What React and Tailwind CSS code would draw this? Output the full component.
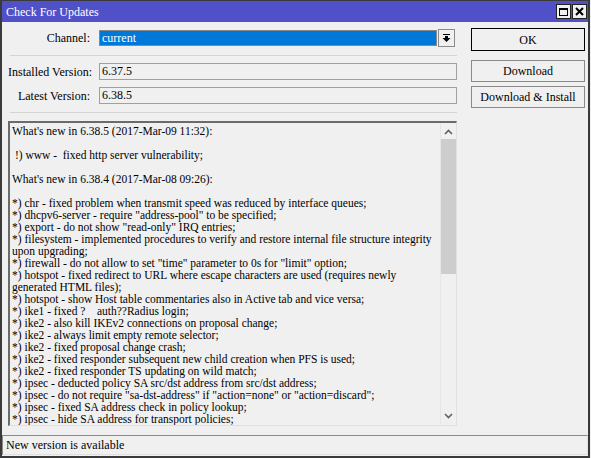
import React from "react";

const lines = [
  "What's new in 6.38.5 (2017-Mar-09 11:32):",
  "",
  " !) www -  fixed http server vulnerability;",
  "",
  "What's new in 6.38.4 (2017-Mar-08 09:26):",
  "",
  "*) chr - fixed problem when transmit speed was reduced by interface queues;",
  '*) dhcpv6-server - require "address-pool" to be specified;',
  '*) export - do not show "read-only" IRQ entries;',
  "*) filesystem - implemented procedures to verify and restore internal file structure integrity",
  "upon upgrading;",
  '*) firewall - do not allow to set "time" parameter to 0s for "limit" option;',
  "*) hotspot - fixed redirect to URL where escape characters are used (requires newly",
  "generated HTML files);",
  "*) hotspot - show Host table commentaries also in Active tab and vice versa;",
  "*) ike1 - fixed ?    auth??Radius login;",
  "*) ike2 - also kill IKEv2 connections on proposal change;",
  "*) ike2 - always limit empty remote selector;",
  "*) ike2 - fixed proposal change crash;",
  "*) ike2 - fixed responder subsequent new child creation when PFS is used;",
  "*) ike2 - fixed responder TS updating on wild match;",
  "*) ipsec - deducted policy SA src/dst address from src/dst address;",
  '*) ipsec - do not require "sa-dst-address" if "action=none" or "action=discard";',
  "*) ipsec - fixed SA address check in policy lookup;",
  "*) ipsec - hide SA address for transport policies;",
];

function Field({ label, value }) {
  return (
    <div className="flex items-center h-[17px]">
      <div className="w-[82px] text-right whitespace-nowrap">{label}</div>
      <div className="ml-[9px] flex-1 h-[17px] border border-[#a0a0a0] bg-[#f0f0f0] pl-[2px] leading-[15px]">
        {value}
      </div>
    </div>
  );
}

function Btn({ children, def, className = "" }) {
  return (
    <div
      className={
        "h-[22px] flex items-center justify-center bg-[#f0f0f0] " +
        (def ? "border border-black " : "border border-[#8a8a8a] ") +
        className
      }
    >
      {children}
    </div>
  );
}

export default function App() {
  return (
    <div
      className="w-[591px] h-[458px] bg-[#f0f0f0] text-[12px] text-black"
      style={{ fontFamily: '"Liberation Serif", serif' }}
    >
      <div className="w-[590px] h-[458px] flex flex-col border-l-2 border-r-2 border-b-2 border-t border-[#3a3a3a] bg-[#f0f0f0]">
        {/* title bar */}
        <div className="h-[21px] bg-[#5050c8] flex items-center justify-between pl-[4px] pr-[1px] shrink-0">
          <span className="text-white text-[12px]">Check For Updates</span>
          <div className="flex gap-[1px]">
            <div className="w-[15px] h-[15px] bg-[#f0f0f0] border border-[#222] flex items-center justify-center">
              <div className="w-[9px] h-[8px] border border-black border-t-2" />
            </div>
            <div className="w-[15px] h-[15px] bg-[#f0f0f0] border border-[#222] flex items-center justify-center">
              <svg width="9" height="9" viewBox="0 0 9 9">
                <path d="M1 1 L8 8 M8 1 L1 8" stroke="black" strokeWidth="2" />
              </svg>
            </div>
          </div>
        </div>

        {/* body */}
        <div className="flex flex-1 min-h-0">
          <div className="w-[455px] pl-[6px] flex flex-col">
            {/* channel row */}
            <div className="flex items-center h-[18px] mt-[7px]">
              <div className="w-[82px] text-right">Channel:</div>
              <div className="ml-[9px] w-[338px] h-[16px] bg-[#0078d7] border border-[#888] text-white leading-[14px] pl-[2px]">
                current
              </div>
              <div className="ml-[1px] w-[17px] h-[18px] bg-[#f0f0f0] border border-[#8a8a8a] flex items-center justify-center">
                <svg width="9" height="9" viewBox="0 0 9 9">
                  <rect x="1" y="0" width="7" height="1" fill="black" />
                  <rect x="3" y="2" width="3" height="2" fill="black" />
                  <path d="M0.5 4 L8.5 4 L4.5 8 Z" fill="black" />
                </svg>
              </div>
            </div>
            <div className="mt-[8px] ml-[2px] h-[1px] bg-[#d4d4d4]" />
            <div className="mt-[7px] flex flex-col gap-[7px]">
              <Field label="Installed Version:" value="6.37.5" />
              <Field label="Latest Version:" value="6.38.5" />
            </div>
            <div className="mt-[8px] ml-[2px] h-[1px] bg-[#d4d4d4]" />

            {/* text area */}
            <div className="mt-[8px] h-[305px] flex border-t-2 border-l-2 border-[#6b6b6b] border-r border-b border-r-[#e0e0e0] border-b-[#e0e0e0] bg-[#f0f0f0]">
              <div className="flex-1 pl-[2px] pt-[2px] text-[11.5px] leading-[12px] overflow-hidden">
                {lines.map((l, i) => (
                  <div key={i} className="h-[12px] whitespace-pre">
                    {l}
                  </div>
                ))}
              </div>
              <div className="w-[16px] border-l border-[#e6e6e6] flex flex-col items-center">
                <svg width="9" height="6" viewBox="0 0 9 6" className="mt-[6px]">
                  <path d="M1 5 L4.5 1.5 L8 5" stroke="#606060" strokeWidth="1.6" fill="none" />
                </svg>
                <div className="mt-[4px] w-[15px] h-[135px] bg-[#cdcdcd]" />
                <div className="flex-1" />
                <svg width="9" height="6" viewBox="0 0 9 6" className="mb-[6px]">
                  <path d="M1 1 L4.5 4.5 L8 1" stroke="#606060" strokeWidth="1.6" fill="none" />
                </svg>
              </div>
            </div>
          </div>

          {/* right buttons */}
          <div className="ml-[14px] w-[114px] flex flex-col">
            <Btn def className="mt-[6px] h-[23px]">OK</Btn>
            <Btn className="mt-[9px]">Download</Btn>
            <Btn className="mt-[4px]">Download &amp; Install</Btn>
          </div>
        </div>

        {/* status bar */}
        <div className="mx-0 mb-[1px] h-[20px] border border-[#8a8a8a] border-r-[#e0e0e0] border-b-[#e0e0e0] flex items-center pl-[3px] shrink-0">
          New version is available
        </div>
      </div>
    </div>
  );
}
